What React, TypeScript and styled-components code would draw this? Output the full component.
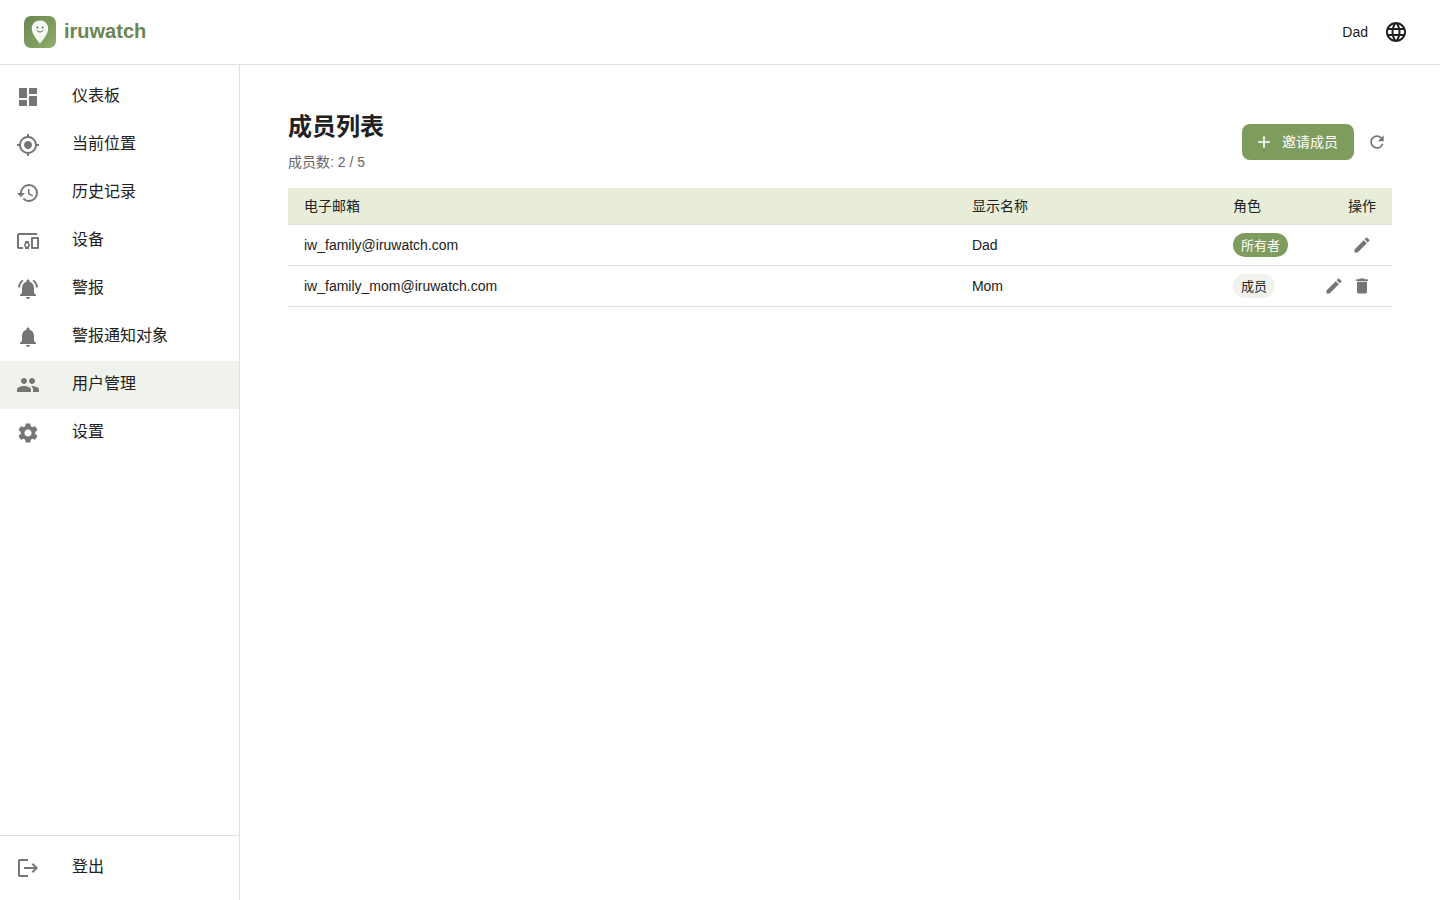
import React from 'react';
import styled, { createGlobalStyle, css } from 'styled-components';
import {
  MdAdd,
  MdDashboard,
  MdDelete,
  MdDevicesOther,
  MdEdit,
  MdHistory,
  MdLanguage,
  MdLogout,
  MdMyLocation,
  MdNotifications,
  MdNotificationsActive,
  MdPeople,
  MdRefresh,
  MdSettings,
} from 'react-icons/md';
import type { IconType } from 'react-icons';

const color = {
  text: '#212121',
  muted: '#757575',
  secondary: '#666666',
  line: '#e0e0e0',
  primary: '#7f9c5f',
  brand: '#6b8550',
  headerRow: '#e8edd9',
  selected: '#f0f3eb',
};

const GlobalStyle = createGlobalStyle`
  *, *::before, *::after { box-sizing: border-box; }
  body {
    margin: 0;
    background: #fff;
    color: ${color.text};
    font-family: 'Liberation Sans', 'Noto Sans CJK SC', sans-serif;
    font-size: 14px;
    line-height: 20px;
  }
  button { font: inherit; border: 0; background: none; padding: 0; cursor: pointer; }
`;

const Shell = styled.div`
  display: flex;
  flex-direction: column;
  min-height: 100vh;
`;

const TopBar = styled.header`
  display: flex;
  align-items: center;
  justify-content: space-between;
  height: 65px;
  padding: 0 24px;
  border-bottom: 1px solid ${color.line};
`;

const Brand = styled.a`
  display: flex;
  align-items: center;
  gap: 8px;
  color: ${color.brand};
  font-size: 20px;
  font-weight: 700;
  line-height: 30px;
  text-decoration: none;
`;

const Label = styled.span`
  padding-bottom: 2px;
`;

const Account = styled.div`
  display: flex;
  align-items: center;
  gap: 8px;
`;

const IconButton = styled.button<{ $size: number; $tone?: string }>`
  display: inline-flex;
  align-items: center;
  justify-content: center;
  width: ${(p) => p.$size}px;
  height: ${(p) => p.$size}px;
  border-radius: 50%;
  color: ${(p) => p.$tone ?? color.muted};
`;

const Body = styled.div`
  display: flex;
  flex: 1;
`;

const Sidebar = styled.aside`
  display: flex;
  flex-direction: column;
  justify-content: space-between;
  flex: 0 0 240px;
  border-right: 1px solid ${color.line};
`;

const NavList = styled.nav`
  display: flex;
  flex-direction: column;
  padding: 8px 0;
`;

const SidebarFooter = styled.div`
  padding: 8px 0;
  border-top: 1px solid ${color.line};
`;

const navRow = css`
  display: flex;
  align-items: center;
  gap: 32px;
  width: 100%;
  height: 48px;
  padding: 0 16px;
  font-size: 16px;
  line-height: 24px;
  text-align: left;
  text-decoration: none;
`;

const NavLink = styled.a<{ $selected?: boolean }>`
  ${navRow}
  color: ${color.text};
  background: ${(p) => (p.$selected ? color.selected : 'transparent')};
  svg { color: ${color.muted}; }
`;

const LogoutButton = styled.button`
  && { ${navRow} }
  color: ${color.text};
  svg { color: ${color.muted}; }
`;

const Main = styled.main`
  flex: 1;
  min-width: 0;
  padding: 47px 48px;
`;

const PageHeader = styled.div`
  display: flex;
  align-items: center;
  justify-content: space-between;
  margin-bottom: 16px;
`;

const Title = styled.h1`
  margin: 0 0 10px;
  font-size: 24px;
  font-weight: 700;
  line-height: 30px;
`;

const Count = styled.p`
  margin: 0;
  color: ${color.secondary};
`;

const Actions = styled.div`
  display: flex;
  align-items: center;
  gap: 8px;
`;

const InviteButton = styled.button`
  && { padding: 0 16px 0 12px; }
  display: flex;
  align-items: center;
  gap: 8px;
  height: 36px;
  border-radius: 8px;
  background: ${color.primary};
  color: #fff;
`;

const MemberTable = styled.table`
  width: 100%;
  border-collapse: separate;
  border-spacing: 0;
`;

const HeadCell = styled.th<{ $fit?: boolean; $right?: boolean }>`
  width: ${(p) => (p.$fit ? '1px' : 'auto')};
  padding: 6px 16px;
  border-bottom: 1px solid ${color.line};
  background: ${color.headerRow};
  font-weight: 400;
  line-height: 24px;
  text-align: ${(p) => (p.$right ? 'right' : 'left')};
  white-space: nowrap;
`;

const Cell = styled.td`
  height: 41px;
  padding: 6px 16px;
  border-bottom: 1px solid ${color.line};
  white-space: nowrap;
`;

const RowActions = styled.div`
  display: flex;
  justify-content: flex-end;
`;

const RoleChip = styled.span<{ $owner?: boolean }>`
  display: flex;
  align-items: center;
  width: fit-content;
  height: 24px;
  padding: 2px 8px 0;
  border-radius: 12px;
  background: ${(p) => (p.$owner ? color.primary : color.selected)};
  color: ${(p) => (p.$owner ? '#fff' : color.text)};
  font-size: 13px;
`;

const Logo = () => (
  <svg width="32" height="32" viewBox="0 0 32 32" aria-hidden="true">
    <defs>
      <linearGradient id="logo" x1="0" y1="0" x2="1" y2="1">
        <stop offset="0" stopColor="#6b8550" />
        <stop offset="1" stopColor="#8fae6b" />
      </linearGradient>
    </defs>
    <rect width="32" height="32" rx="7" fill="url(#logo)" />
    <path d="M16 4.5c-4.7 0-8.2 3.5-8.2 8 0 5.3 4.7 10.6 8.2 15.2 3.5-4.6 8.2-9.900 8.200-15.200 0-4.500-3.500-8-8.200-8z" fill="#f7faf3" />
    <circle cx="13.500" cy="11.500" r="0.900" fill="#4f6638" />
    <circle cx="18.500" cy="11.500" r="0.900" fill="#4f6638" />
    <path d="M13 14.800c1.500 1.700 4.500 1.700 6 0" fill="none" stroke="#4f6638" strokeWidth="0.900" strokeLinecap="round" />
  </svg>
);

const navItems: { label: string; icon: IconType; selected?: boolean }[] = [
  { label: '仪表板', icon: MdDashboard },
  { label: '当前位置', icon: MdMyLocation },
  { label: '历史记录', icon: MdHistory },
  { label: '设备', icon: MdDevicesOther },
  { label: '警报', icon: MdNotificationsActive },
  { label: '警报通知对象', icon: MdNotifications },
  { label: '用户管理', icon: MdPeople, selected: true },
  { label: '设置', icon: MdSettings },
];

const members = [
  { email: 'iw_family@iruwatch.com', name: 'Dad', role: '所有者', owner: true },
  { email: 'iw_family_mom@iruwatch.com', name: 'Mom', role: '成员', owner: false },
];

export default function App() {
  return (
    <Shell lang="zh-CN">
      <GlobalStyle />
      <TopBar>
        <Brand href="#">
          <Logo />
          <Label>iruwatch</Label>
        </Brand>
        <Account>
          <span>Dad</span>
          <IconButton $size={40} $tone={color.text} aria-label="语言">
            <MdLanguage size={24} />
          </IconButton>
        </Account>
      </TopBar>
      <Body>
        <Sidebar>
          <NavList>
            {navItems.map(({ label, icon: Icon, selected }) => (
              <NavLink key={label} href="#" $selected={selected} aria-current={selected ? 'page' : undefined}>
                <Icon size={24} />
                <Label>{label}</Label>
              </NavLink>
            ))}
          </NavList>
          <SidebarFooter>
            <LogoutButton>
              <MdLogout size={24} />
              <Label>登出</Label>
            </LogoutButton>
          </SidebarFooter>
        </Sidebar>
        <Main>
          <PageHeader>
            <div>
              <Title>成员列表</Title>
              <Count>成员数: 2 / 5</Count>
            </div>
            <Actions>
              <InviteButton>
                <MdAdd size={20} />
                邀请成员
              </InviteButton>
              <IconButton $size={30} aria-label="刷新">
                <MdRefresh size={20} />
              </IconButton>
            </Actions>
          </PageHeader>
          <MemberTable>
            <thead>
              <tr>
                <HeadCell>电子邮箱</HeadCell>
                <HeadCell>显示名称</HeadCell>
                <HeadCell $fit>角色</HeadCell>
                <HeadCell $fit $right>操作</HeadCell>
              </tr>
            </thead>
            <tbody>
              {members.map((m) => (
                <tr key={m.email}>
                  <Cell>{m.email}</Cell>
                  <Cell>{m.name}</Cell>
                  <Cell>
                    <RoleChip $owner={m.owner}>{m.role}</RoleChip>
                  </Cell>
                  <Cell>
                    <RowActions>
                      <IconButton $size={28} aria-label="编辑">
                        <MdEdit size={20} />
                      </IconButton>
                      {!m.owner && (
                        <IconButton $size={28} aria-label="删除">
                          <MdDelete size={20} />
                        </IconButton>
                      )}
                    </RowActions>
                  </Cell>
                </tr>
              ))}
            </tbody>
          </MemberTable>
        </Main>
      </Body>
    </Shell>
  );
}
